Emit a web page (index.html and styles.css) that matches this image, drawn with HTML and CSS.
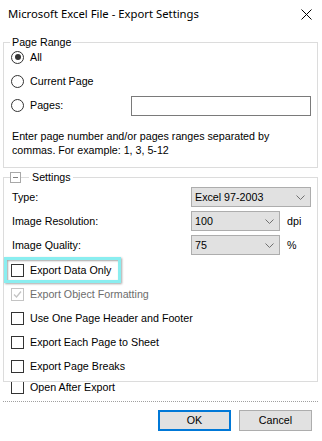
FILE: index.html
```html
<!DOCTYPE html>
<html lang="en">
<head>
    <meta charset="UTF-8">
    <title>Export Settings</title>
    <link rel="stylesheet" href="styles.css">
</head>
<body>
    <div class="titlebar">
        <span class="title">Microsoft Excel File - Export Settings</span>
        <svg class="close" width="11" height="11" viewBox="0 0 11 11"><path d="M0.5 0.5L10.5 10.5M10.5 0.5L0.5 10.5" stroke="#000" stroke-width="1"/></svg>
    </div>
    <div class="content">
        <fieldset class="group range">
            <legend class="legend">Page Range</legend>
            <div class="options">
                <div class="option"><span class="radio checked"></span>All</div>
                <div class="option"><span class="radio"></span>Current Page</div>
                <div class="option"><span class="radio"></span>Pages:<input class="pages-input" type="text"></div>
            </div>
            <p class="hint">Enter page number and/or pages ranges separated by<br>commas. For example: 1, 3, 5-12</p>
        </fieldset>

        <fieldset class="group settings">
            <legend class="legend legend-settings">
                <svg class="collapse" width="11" height="11" viewBox="0 0 11 11"><rect x="0.5" y="0.5" width="10" height="10" fill="#fff" stroke="#a8a8a8"/><path d="M3 5.5H8" stroke="#808080"/></svg><span class="dash"></span>Settings
            </legend>
            <div class="fields">
                <span class="field-label">Type:</span>
                <div class="combo combo-wide"><span>Excel 97-2003</span><svg width="9" height="5" viewBox="0 0 9 5"><path d="M0.5 0.5L4.5 4.5L8.5 0.5" fill="none" stroke="#707070"/></svg></div>

                <span class="field-label">Image Resolution:</span>
                <div class="combo"><span>100</span><svg width="9" height="5" viewBox="0 0 9 5"><path d="M0.5 0.5L4.5 4.5L8.5 0.5" fill="none" stroke="#707070"/></svg></div>
                <span class="unit">dpi</span>

                <span class="field-label">Image Quality:</span>
                <div class="combo"><span>75</span><svg width="9" height="5" viewBox="0 0 9 5"><path d="M0.5 0.5L4.5 4.5L8.5 0.5" fill="none" stroke="#707070"/></svg></div>
                <span class="unit">%</span>
            </div>
            <div class="checks">
                <div class="check hl"><span class="box"></span>Export Data Only</div>
                <div class="check disabled"><span class="box"><svg width="11" height="11" viewBox="0 0 11 11"><path d="M2 5.5L4.5 8L9 2.5" fill="none" stroke="#c4c4c4" stroke-width="1.3"/></svg></span>Export Object Formatting</div>
                <div class="check"><span class="box"></span>Use One Page Header and Footer</div>
                <div class="check"><span class="box"></span>Export Each Page to Sheet</div>
                <div class="check"><span class="box"></span>Export Page Breaks</div>
            </div>
        </fieldset>
        <div class="check open-after"><span class="box"></span>Open After Export</div>
        <div class="separator"></div>
        <div class="actions">
            <button class="btn btn-primary">OK</button>
            <button class="btn">Cancel</button>
        </div>
    </div>
</body>
</html>
```

FILE: styles.css
```css
*, *::before, *::after{
    box-sizing: border-box;
}
body{
    margin: 0;
    width: 322px;
    height: 441px;
    overflow: hidden;
    background-color: #fff;
    color: #000;
    font: 10.7px/13px "Liberation Sans", Arial, sans-serif;
}
.titlebar{
    height: 30px;
    display: flex;
    align-items: center;
    justify-content: space-between;
    padding: 0 10px 2px 8px;
}
.title{
    font: 11.3px/16px "Noto Sans", sans-serif;
}
.content{
    padding: 0 4px 0 3px;
}
.group{
    position: relative;
    z-index: 1;
    background-color: #fff;
    margin: 6px 0 0;
    padding: 0 6px 10px 7px;
    border: 1px solid #dcdcdc;
    min-width: 0;
}
.legend{
    margin-left: -1px;
    padding: 0 2px;
    line-height: 12px;
}
.options{
    margin-top: -3px;
}
.option{
    display: flex;
    align-items: center;
    height: 24px;
}
.radio{
    flex: none;
    width: 13px;
    height: 13px;
    border: 1px solid #333;
    border-radius: 50%;
    margin-right: 6px;
    position: relative;
}
.radio.checked::after{
    content: "";
    position: absolute;
    left: 2.5px;
    top: 2.5px;
    width: 6px;
    height: 6px;
    border-radius: 50%;
    background-color: #333;
}
.pages-input{
    margin: 2px 0 0 auto;
    width: 180px;
    height: 20px;
    border: 1px solid #7a7a7a;
    padding: 0;
}
.hint{
    margin: 12px 0 0 1px;
    line-height: 14px;
}
.settings{
    margin-top: 3px;
    padding-bottom: 3px;
}
.legend-settings{
    padding: 0 2px 0 0;
}
.collapse{
    vertical-align: top;
    margin-top: 1px;
}
.dash{
    display: inline-block;
    width: 8px;
    height: 1px;
    background-color: #dcdcdc;
    vertical-align: top;
    margin: 6px 3px 0 0;
}
.fields{
    display: grid;
    grid-template-columns: 180px auto 1fr;
    grid-auto-rows: 24px;
    align-items: center;
    margin-top: 2px;
}
.field-label{
    padding-left: 1px;
    grid-column: 1;
}
.combo{
    width: 89px;
    height: 20px;
    border: 1px solid #adadad;
    background-color: #e1e1e1;
    display: flex;
    align-items: center;
    justify-content: space-between;
    padding: 0 5px 0 3px;
}
.combo-wide{
    width: 120px;
    grid-column: 2 / 4;
}
.unit{
    margin-left: 7px;
}
.checks{
    margin-top: 1px;
}
.check{
    display: flex;
    align-items: center;
    height: 24px;
    position: relative;
}
.box{
    flex: none;
    width: 13px;
    height: 13px;
    border: 1px solid #333;
    background-color: #fff;
    margin-right: 6px;
}
.box svg{
    display: block;
}
.check.disabled{
    color: #6d6d6d;
}
.check.disabled .box{
    border-color: #c4c4c4;
}
.check.hl::after{
    content: "";
    position: absolute;
    left: -7px;
    top: -1px;
    width: 117px;
    height: 26px;
    border: 3px solid #8aeef0;
    box-shadow: inset 1px 1px 2px rgba(0, 0, 0, 0.35), 1px 1px 2px rgba(0, 0, 0, 0.35);
}
.open-after{
    margin: -7px 0 0 8px;
}
.separator{
    margin-top: 2px;
    border-top: 1px dotted #a0a0a0;
}
.actions{
    display: flex;
    justify-content: flex-end;
    gap: 8px;
    padding: 8px 6px 0 0;
}
.btn{
    width: 73px;
    height: 21px;
    border: 1px solid #adadad;
    background-color: #e1e1e1;
    font: inherit;
    color: #000;
    padding: 0;
}
.btn-primary{
    border: 2px solid #0078d7;
}
```
